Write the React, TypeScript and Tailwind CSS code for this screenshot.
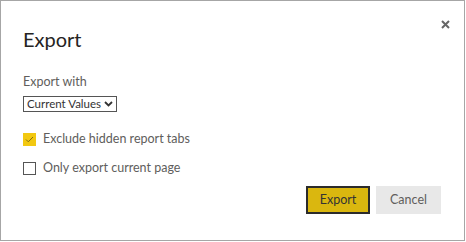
import React from "react";

// Export dialog: title, a select, two checkboxes and a right-aligned button pair.
export default function App() {
  return (
    <div
      className="relative w-[465px] h-[241px] border border-[#a6a6a6] bg-white text-[#333]"
      style={{ fontFamily: 'Lato, "Open Sans", sans-serif' }}
    >
      <button className="absolute left-[439px] top-[18px] flex h-[10px] w-[10px] items-center justify-center text-[#666]">
        <svg width="9" height="9" viewBox="0 0 9 9">
          <path d="M1 1L8 8M8 1L1 8" stroke="#666" strokeWidth="2" />
        </svg>
      </button>

      <div className="flex flex-col pl-[22px]">
        <h1 className="mt-[24px] text-[20px] font-normal leading-[28px] text-[#252423]">Export</h1>

        <div className="mt-[21px] text-[12.5px] leading-[16px] text-[#605e5c]">Export with</div>

        <div className="mt-[6px] flex h-[16px] w-[94px] items-center justify-between whitespace-nowrap border border-[#555] pl-[3px] pr-[3px] text-[11.5px] leading-[14px] text-[#333]">
          <span>Current Values</span>
          <svg width="9" height="6" viewBox="0 0 9 6" className="shrink-0">
            <path d="M1 1L4.5 4.5L8 1" fill="none" stroke="#333" strokeWidth="1.8" />
          </svg>
        </div>

        <label className="mt-[19px] flex items-center gap-[7px] whitespace-nowrap text-[12.5px] leading-[16px] text-[#605e5c]">
          <span className="flex h-[13px] w-[13px] items-center justify-center bg-[#f2c811]">
            <svg width="9" height="7" viewBox="0 0 9 7">
              <path d="M1 3.5L3.3 5.8L8 1" fill="none" stroke="#806c10" strokeWidth="1" />
            </svg>
          </span>
          Exclude hidden report tabs
        </label>

        <label className="mt-[13px] flex items-center gap-[7px] whitespace-nowrap text-[12.5px] leading-[16px] text-[#605e5c]">
          <span className="h-[13px] w-[13px] border border-[#555]" />
          Only export current page
        </label>

        <div className="mt-[10px] flex justify-end gap-[6px] pr-[23px]">
          <button className="h-[28px] w-[64px] border-2 border-[#2b2b2b] bg-[#dab70f] text-[12.5px] text-[#333]">
            Export
          </button>
          <button className="h-[28px] w-[65px] bg-[#e8e8e8] text-[12.5px] text-[#605e5c]">Cancel</button>
        </div>
      </div>
    </div>
  );
}
